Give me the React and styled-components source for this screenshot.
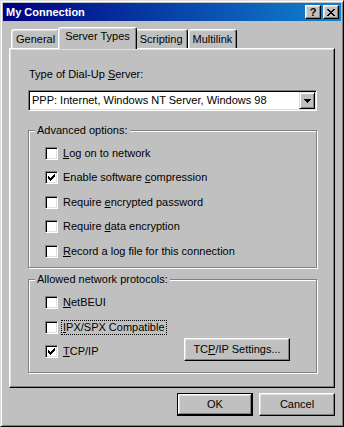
import React, { useState } from "react";
import styled, { createGlobalStyle } from "styled-components";

const GlobalStyle = createGlobalStyle`
  html, body {
    margin: 0;
    padding: 0;
    background: #c0c0c0;
  }
  body {
    font-family: "Liberation Sans", Arial, sans-serif;
    font-size: 11px;
    color: #000;
  }
`;

const Window = styled.div`
  box-sizing: border-box;
  width: 344px;
  height: 427px;
  background: #c0c0c0;
  border: 1px solid;
  border-color: #dfdfdf #000 #000 #dfdfdf;
  box-shadow: inset 1px 1px #fff, inset -1px -1px #808080;
  padding: 2px;
  display: flex;
  flex-direction: column;
`;

const TitleBar = styled.div`
  height: 18px;
  flex: none;
  display: flex;
  align-items: center;
  padding: 0 2px 0 3px;
  background: linear-gradient(90deg, #000080, #1084d0);
`;

const Title = styled.div`
  flex: 1;
  color: #fff;
  font-weight: bold;
  line-height: 13px;
`;

const CaptionButton = styled.div`
  box-sizing: border-box;
  width: 16px;
  height: 14px;
  margin-left: ${(p) => p.$gap || 0}px;
  background: #c0c0c0;
  border: 1px solid;
  border-color: #fff #000 #000 #fff;
  box-shadow: inset -1px -1px #808080, inset 1px 1px #dfdfdf;
  display: flex;
  align-items: center;
  justify-content: center;
  font-weight: bold;
  font-size: 11px;
  line-height: 11px;
`;

const Body = styled.div`
  flex: 1;
  display: flex;
  flex-direction: column;
  padding: 6px 6px 0;
`;

const TabRow = styled.div`
  display: flex;
  align-items: flex-end;
  height: 21px;
  padding-left: 2px;
`;

const Tab = styled.div`
  box-sizing: border-box;
  position: relative;
  z-index: ${(p) => (p.$active ? 1 : 0)};
  height: ${(p) => (p.$active ? 22 : 19)}px;
  margin: 0 ${(p) => (p.$active ? -2 : 0)}px ${(p) => (p.$active ? -1 : 0)}px;
  padding: ${(p) => (p.$active ? 2 : 3)}px ${(p) => (p.$active ? 6 : 4)}px 0;
  background: #c0c0c0;
  border: 1px solid;
  border-bottom: none;
  border-color: #fff #000 transparent #fff;
  border-radius: 3px 3px 0 0;
  box-shadow: inset -1px 0 #808080, inset 1px 1px #dfdfdf;
  line-height: 13px;
  white-space: nowrap;
`;

const Panel = styled.div`
  box-sizing: border-box;
  height: 340px;
  flex: none;
  border: 1px solid;
  border-color: #fff #000 #000 #fff;
  box-shadow: inset -1px -1px #808080, inset 1px 1px #dfdfdf;
  padding: 19px 17px 0 18px;
  display: flex;
  flex-direction: column;
`;

const FieldLabel = styled.div`
  line-height: 13px;
  padding-left: 1px;
`;

const Select = styled.div`
  box-sizing: border-box;
  height: 21px;
  margin-top: 9px;
  display: flex;
  align-items: center;
  background: #fff;
  border: 1px solid;
  border-color: #808080 #fff #fff #808080;
  box-shadow: inset 1px 1px #000, inset -1px -1px #dfdfdf;
  padding: 1px 1px 1px 3px;
`;

const SelectText = styled.div`
  flex: 1;
  line-height: 13px;
  white-space: nowrap;
`;

const ArrowButton = styled.div`
  box-sizing: border-box;
  width: 16px;
  height: 17px;
  background: #c0c0c0;
  border: 1px solid;
  border-color: #dfdfdf #000 #000 #dfdfdf;
  box-shadow: inset 1px 1px #fff, inset -1px -1px #808080;
  display: flex;
  align-items: center;
  justify-content: center;
`;

const Group = styled.div`
  margin-top: ${(p) => p.$top}px;
  border: 1px solid #808080;
  box-shadow: inset 1px 1px #fff, 1px 1px #fff;
  padding: 0 0 ${(p) => p.$bottom}px 0;
`;

const GroupTitle = styled.div`
  width: fit-content;
  margin: -7px 0 0 6px;
  padding: 0 2px;
  background: #c0c0c0;
  line-height: 13px;
`;

const Rows = styled.div`
  padding: ${(p) => p.$top}px 0 0 16px;
`;

const Row = styled.div`
  height: 24.5px;
  display: flex;
  align-items: center;
`;

const Box = styled.div`
  box-sizing: border-box;
  width: 13px;
  height: 13px;
  flex: none;
  background: #fff;
  border: 1px solid;
  border-color: #808080 #fff #fff #808080;
  box-shadow: inset 1px 1px #000, inset -1px -1px #dfdfdf;
  display: flex;
  align-items: center;
  justify-content: center;
`;

const CheckLabel = styled.span`
  margin-left: 4px;
  padding: 0 1px;
  line-height: 13px;
  white-space: nowrap;
  outline: ${(p) => (p.$focus ? "1px dotted #000" : "none")};
`;

const Button = styled.div`
  box-sizing: border-box;
  width: ${(p) => p.$w}px;
  height: 23px;
  flex: none;
  background: #c0c0c0;
  display: flex;
  align-items: center;
  justify-content: center;
  line-height: 13px;
  border: 1px solid;
  border-color: ${(p) => (p.$default ? "#000" : "#fff #000 #000 #fff")};
  box-shadow: ${(p) =>
    p.$default
      ? "inset -1px -1px #000, inset 1px 1px #fff, inset -2px -2px #808080, inset 2px 2px #dfdfdf"
      : "inset -1px -1px #808080, inset 1px 1px #dfdfdf"};
`;

const SettingsButton = styled(Button)`
  margin: 0 26px 5px auto;
`;

const Footer = styled.div`
  display: flex;
  justify-content: flex-end;
  gap: 6px;
  margin-top: 5px;
`;

function Accel({ text, at }) {
  return (
    <>
      {text.slice(0, at)}
      <u>{text[at]}</u>
      {text.slice(at + 1)}
    </>
  );
}

const CheckMark = () => (
  <svg width="7" height="7" viewBox="0 0 7 7" shapeRendering="crispEdges">
    <path
      fill="#000"
      d="M0 2h1v3H0z M1 3h1v3H1z M2 4h1v3H2z M3 3h1v3H3z M4 2h1v3H4z M5 1h1v3H5z M6 0h1v3H6z"
    />
  </svg>
);

const CloseGlyph = () => (
  <svg width="8" height="7" viewBox="0 0 8 7" shapeRendering="crispEdges">
    <path
      fill="#000"
      d="M0 0h2v1H0z M6 0h2v1H6z M1 1h2v1H1z M5 1h2v1H5z M2 2h4v1H2z M3 3h2v1H3z M2 4h4v1H2z M1 5h2v1H1z M5 5h2v1H5z M0 6h2v1H0z M6 6h2v1H6z"
    />
  </svg>
);

const DownArrow = () => (
  <svg width="7" height="4" viewBox="0 0 7 4" shapeRendering="crispEdges">
    <path fill="#000" d="M0 0h7v1H0z M1 1h5v1H1z M2 2h3v1H2z M3 3h1v1H3z" />
  </svg>
);

function CheckBox({ checked, label, at, focus, onToggle }) {
  return (
    <>
      <Box onClick={onToggle}>{checked && <CheckMark />}</Box>
      <CheckLabel $focus={focus} onClick={onToggle}>
        <Accel text={label} at={at} />
      </CheckLabel>
    </>
  );
}

const advancedOptions = [
  { label: "Log on to network", at: 0, checked: false },
  { label: "Enable software compression", at: 16, checked: true },
  { label: "Require encrypted password", at: 8, checked: false },
  { label: "Require data encryption", at: 8, checked: false },
  { label: "Record a log file for this connection", at: 0, checked: false },
];

const protocols = [
  { label: "NetBEUI", at: 0, checked: false },
  { label: "IPX/SPX Compatible", at: 0, checked: false, focus: true },
  { label: "TCP/IP", at: 0, checked: true },
];

const tabs = ["General", "Server Types", "Scripting", "Multilink"];

export default function App() {
  const [adv, setAdv] = useState(advancedOptions);
  const [proto, setProto] = useState(protocols);
  const [active, setActive] = useState(1);

  const toggle = (list, setList, i) =>
    setList(list.map((o, j) => (j === i ? { ...o, checked: !o.checked } : o)));

  return (
    <>
      <GlobalStyle />
      <Window>
        <TitleBar>
          <Title>My Connection</Title>
          <CaptionButton>?</CaptionButton>
          <CaptionButton $gap={2}>
            <CloseGlyph />
          </CaptionButton>
        </TitleBar>
        <Body>
          <TabRow>
            {tabs.map((t, i) => (
              <Tab key={t} $active={i === active} onClick={() => setActive(i)}>
                {t}
              </Tab>
            ))}
          </TabRow>
          <Panel>
            <FieldLabel>
              <Accel text="Type of Dial-Up Server:" at={16} />
            </FieldLabel>
            <Select>
              <SelectText>PPP: Internet, Windows NT Server, Windows 98</SelectText>
              <ArrowButton>
                <DownArrow />
              </ArrowButton>
            </Select>

            <Group $top={19} $bottom={3}>
              <GroupTitle>Advanced options:</GroupTitle>
              <Rows $top={4}>
                {adv.map((o, i) => (
                  <Row key={o.label}>
                    <CheckBox {...o} onToggle={() => toggle(adv, setAdv, i)} />
                  </Row>
                ))}
              </Rows>
            </Group>

            <Group $top={11} $bottom={7.5}>
              <GroupTitle>Allowed network protocols:</GroupTitle>
              <Rows $top={5}>
                {proto.map((o, i) => (
                  <Row key={o.label}>
                    <CheckBox {...o} onToggle={() => toggle(proto, setProto, i)} />
                    {i === proto.length - 1 && (
                      <SettingsButton $w={106}>
                        <Accel text="TCP/IP Settings..." at={2} />
                      </SettingsButton>
                    )}
                  </Row>
                ))}
              </Rows>
            </Group>
          </Panel>
          <Footer>
            <Button $w={76} $default>
              OK
            </Button>
            <Button $w={76}>Cancel</Button>
          </Footer>
        </Body>
      </Window>
    </>
  );
}
